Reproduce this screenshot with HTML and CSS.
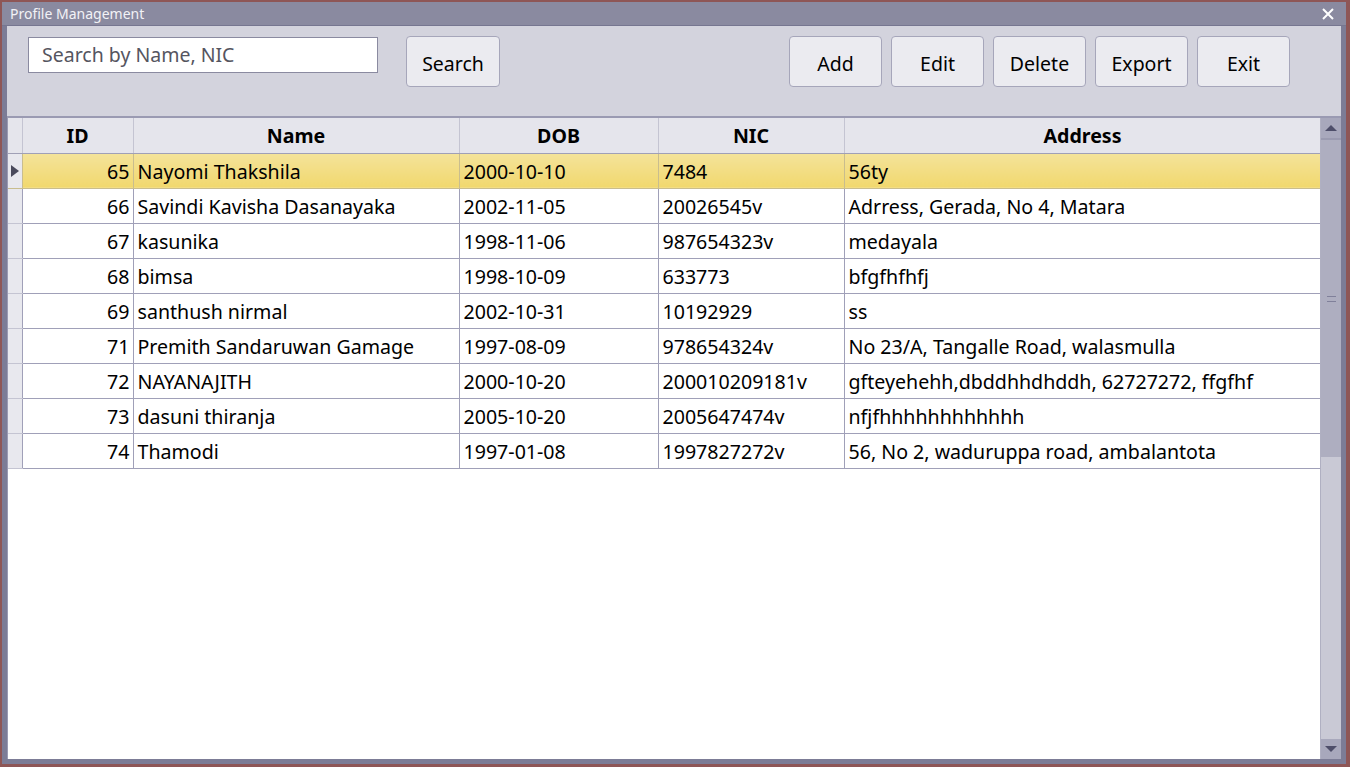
FILE: index.html
```html
<!DOCTYPE html>
<html>
<head>
<meta charset="utf-8">
<link rel="stylesheet" href="styles.css">
</head>
<body>
<div class="window">
  <div class="titlebar">
    <span class="title">Profile Management</span>
    <svg class="close" width="12" height="12" viewBox="0 0 12 12"><path d="M1 1 L11 11 M11 1 L1 11" stroke="#ffffff" stroke-width="2" fill="none"/></svg>
  </div>
  <div class="client">
    <div class="toolbar">
      <div class="search-box">Search by Name, NIC</div>
      <button class="btn btn-search">Search</button>
      <div class="actions">
        <button class="btn">Add</button>
        <button class="btn">Edit</button>
        <button class="btn">Delete</button>
        <button class="btn">Export</button>
        <button class="btn">Exit</button>
      </div>
    </div>
    <div class="grid">
      <div class="table-area">
        <table class="data">
          <colgroup>
            <col class="c-rh"><col class="c-id"><col class="c-name"><col class="c-dob"><col class="c-nic"><col class="c-addr">
          </colgroup>
          <thead>
            <tr><th class="rh"></th><th>ID</th><th>Name</th><th>DOB</th><th>NIC</th><th>Address</th></tr>
          </thead>
          <tbody>
            <tr class="sel"><td class="rh"><span class="arrow"></span></td><td class="num">65</td><td>Nayomi Thakshila</td><td>2000-10-10</td><td>7484</td><td>56ty</td></tr>
            <tr><td class="rh"></td><td class="num">66</td><td>Savindi Kavisha Dasanayaka</td><td>2002-11-05</td><td>20026545v</td><td>Adrress, Gerada, No 4, Matara</td></tr>
            <tr><td class="rh"></td><td class="num">67</td><td>kasunika</td><td>1998-11-06</td><td>987654323v</td><td>medayala</td></tr>
            <tr><td class="rh"></td><td class="num">68</td><td>bimsa</td><td>1998-10-09</td><td>633773</td><td>bfgfhfhfj</td></tr>
            <tr><td class="rh"></td><td class="num">69</td><td>santhush nirmal</td><td>2002-10-31</td><td>10192929</td><td>ss</td></tr>
            <tr><td class="rh"></td><td class="num">71</td><td>Premith Sandaruwan Gamage</td><td>1997-08-09</td><td>978654324v</td><td>No 23/A, Tangalle Road, walasmulla</td></tr>
            <tr><td class="rh"></td><td class="num">72</td><td>NAYANAJITH</td><td>2000-10-20</td><td>200010209181v</td><td>gfteyehehh,dbddhhdhddh, 62727272, ffgfhf</td></tr>
            <tr><td class="rh"></td><td class="num">73</td><td>dasuni thiranja</td><td>2005-10-20</td><td>2005647474v</td><td>nfjfhhhhhhhhhhhh</td></tr>
            <tr><td class="rh"></td><td class="num">74</td><td>Thamodi</td><td>1997-01-08</td><td>1997827272v</td><td>56, No 2, waduruppa road, ambalantota</td></tr>
          </tbody>
        </table>
      </div>
      <div class="scrollbar">
        <div class="sb-btn"><span class="tri-up"></span></div>
        <div class="sb-thumb"><span class="grip"></span></div>
        <div class="sb-track"></div>
        <div class="sb-btn"><span class="tri-down"></span></div>
      </div>
    </div>
  </div>
</div>
</body>
</html>
```

FILE: styles.css
```css
html, body {
  margin: 0;
  padding: 0;
}
body {
  width: 1350px;
  height: 767px;
  background: #8e5656;
  padding: 2px 4px 3px 2px;
  box-sizing: border-box;
  font-family: "Noto Sans", "Open Sans", sans-serif;
  overflow: hidden;
}
.window {
  width: 1344px;
  height: 762px;
  background: #7c7c96;
  display: flex;
  flex-direction: column;
}
.titlebar {
  height: 23px;
  background: #8a8aa0;
  display: flex;
  align-items: center;
  justify-content: space-between;
  padding: 0 12px 0 8px;
  border-bottom: 1px solid #767690;
}
.title {
  color: #f2f2f6;
  font-size: 14px;
  font-family: "Noto Sans", sans-serif;
}
.close {
  display: block;
}
.client {
  flex: 1;
  margin: 0 5px 5px 5px;
  background: #d3d3dd;
  display: flex;
  flex-direction: column;
  min-height: 0;
}
.toolbar {
  height: 90px;
  box-sizing: border-box;
  display: flex;
  align-items: flex-start;
  padding: 10px 0 0 21px;
}
.search-box {
  width: 350px;
  height: 36px;
  box-sizing: border-box;
  background: #ffffff;
  border: 1px solid #8a8aa0;
  color: #555560;
  font-size: 19.5px;
  line-height: 34px;
  padding-left: 13px;
  margin-top: 1px;
}
.btn {
  width: 93px;
  height: 51px;
  box-sizing: border-box;
  background: #ebebf0;
  border: 1px solid #a6a6ba;
  border-radius: 4px;
  font-family: "Noto Sans", "Open Sans", sans-serif;
  font-size: 19.5px;
  color: #000;
  padding: 0;
  padding-top: 3px;
}
.btn-search {
  margin-left: 28px;
  width: 94px;
}
.actions {
  display: flex;
  gap: 9px;
  margin-left: 289px;
}
.grid {
  flex: 1;
  display: flex;
  border-top: 2px solid #9a9ab2;
  border-left: 1px solid #9a9ab2;
  background: #ffffff;
  min-height: 0;
}
.table-area {
  width: 1313px;
  background: #ffffff;
  overflow: hidden;
}
.data {
  border-collapse: collapse;
  table-layout: fixed;
  width: 1313px;
  font-size: 19.6px;
  line-height: 26px;
  color: #000;
}
.c-rh { width: 14px; }
.c-id { width: 111px; }
.c-name { width: 326px; }
.c-dob { width: 199px; }
.c-nic { width: 186px; }
.c-addr { width: 477px; }
.data th {
  height: 35px;
  background: #e5e5ec;
  border-right: 1px solid #c4c4d2;
  border-bottom: 1px solid #a0a0b6;
  font-weight: bold;
  font-size: 19.6px;
  text-align: center;
  padding: 2px 0 0 0;
  box-sizing: border-box;
}
.data td {
  height: 35px;
  box-sizing: border-box;
  border: 1px solid #a0a0b8;
  border-top: none;
  padding: 2px 4px 0 4px;
  white-space: nowrap;
  overflow: hidden;
}
.data td.rh {
  background: #e8e8ee;
  border-left: none;
  padding: 0;
  border-bottom-color: #c4c4d2;
}
.data td.num {
  text-align: right;
  padding-right: 3px;
}
.data tr.sel td {
  background: linear-gradient(#f4e39a, #f1d86e);
  border-color: #c9bd8e;
}
.data tr.sel td.rh {
  background: #e8e8ee;
}
.arrow {
  display: block;
  width: 0;
  height: 0;
  margin-left: 3px;
  border-top: 6px solid transparent;
  border-bottom: 6px solid transparent;
  border-left: 8px solid #4a4a5c;
}
.scrollbar {
  width: 20px;
  display: flex;
  flex-direction: column;
  background: #c9c9d5;
  border-left: 1px solid #b0b0c2;
}
.sb-btn {
  height: 20px;
  background: #a8a8bc;
  display: flex;
  align-items: center;
  justify-content: center;
}
.sb-thumb {
  height: 317px;
  background: #aeaec0;
  border-top: 2px solid #9a9ab0;
  display: flex;
  align-items: center;
  justify-content: center;
}
.grip {
  width: 9px;
  height: 4px;
  border-top: 1px solid #80809a;
  border-bottom: 1px solid #80809a;
}
.sb-track {
  flex: 1;
  background: #c9c9d5;
}
.tri-up {
  width: 0;
  height: 0;
  border-left: 6px solid transparent;
  border-right: 6px solid transparent;
  border-bottom: 6px solid #4e4e6a;
}
.tri-down {
  width: 0;
  height: 0;
  border-left: 6px solid transparent;
  border-right: 6px solid transparent;
  border-top: 6px solid #4e4e6a;
}
```
